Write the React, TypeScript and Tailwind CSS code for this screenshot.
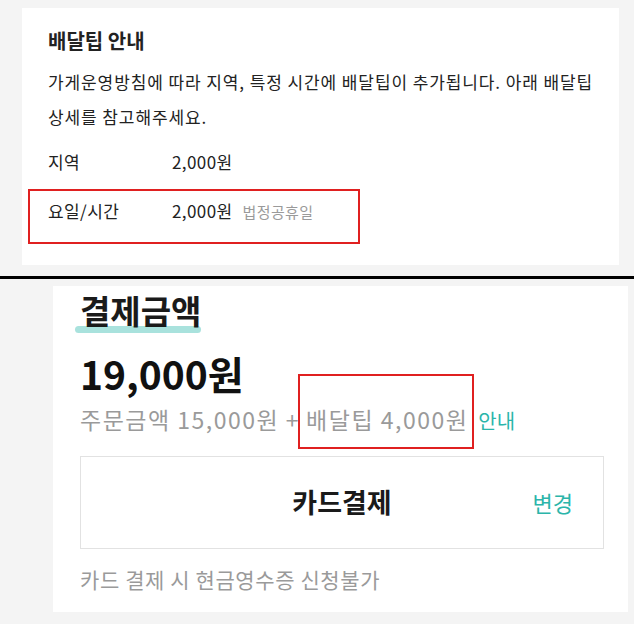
import React from 'react';

const kr = { fontFamily: '"Noto Sans CJK KR", "Noto Sans", sans-serif' };

const TipGuide = () => {
  return (
    <div className="h-[276px] bg-[#f4f4f4] pl-[22px] pr-[15px] pt-[8px]">
      <div className="h-[257px] bg-white pl-[26px] pt-[20px] text-[#222]">
        <h2 className="text-[20px] font-bold leading-[25px]">배달팁 안내</h2>
        <p className="mt-[11px] text-[17px] leading-[35px] tracking-[0.9px]">
          가게운영방침에 따라 지역, 특정 시간에 배달팁이 추가됩니다. 아래 배달팁
          <br />
          상세를 참고해주세요.
        </p>
        <div className="mt-[16px] flex text-[17px] leading-[24px] tracking-[0.4px]">
          <span className="w-[124px]">지역</span>
          <span>2,000원</span>
        </div>
        <div className="-ml-[20px] mt-[15px] w-[332px] border-2 border-[#e02020] pb-[18px] pl-[18px] pt-[8px]">
          <div className="flex items-baseline text-[17px] leading-[24px] tracking-[0.4px]">
            <span className="w-[124px]">요일/시간</span>
            <span>2,000원</span>
            <span className="ml-[10px] text-[15px] text-[#9a9a9a]">법정공휴일</span>
          </div>
        </div>
      </div>
    </div>
  );
};

const PaymentAmount = () => {
  return (
    <div className="h-[345px] bg-[#f4f4f4] pl-[53px] pr-[6px] pt-[7px]">
      <div className="h-[326px] bg-white pl-[27px] pr-[24px] pt-[5px]">
        <h2 className="relative inline-block text-[33px] font-bold leading-[38px] text-[#1a1a1a]">
          <span className="absolute -bottom-[4px] -left-[5px] right-0 h-[7px] rounded-sm bg-[#a9e2dd]"></span>
          <span className="relative">결제금액</span>
        </h2>
        <div className="mt-[20px] text-[39px] font-bold leading-[48px] text-[#111]">19,000원</div>
        <div className="mt-[7px] flex items-baseline text-[23px] leading-[30px] tracking-[1.5px] text-[#9a9a9a]">
          <span>주문금액 15,000원 +</span>
          <span className="relative ml-[6px]">
            배달팁 4,000원
            <span className="absolute -bottom-[15px] -left-[8px] -right-[6px] -top-[30px] border-2 border-[#e02020]"></span>
          </span>
          <span className="ml-[10px] text-[20px] tracking-normal text-[#2bb5aa]">안내</span>
        </div>
        <div className="mt-[20px] grid h-[93px] grid-cols-[1fr_auto_1fr] items-center border border-[#e2e2e2] px-[30px]">
          <span></span>
          <span className="text-[27px] font-bold text-[#1a1a1a]">카드결제</span>
          <span className="justify-self-end text-[22px] text-[#2bb5aa]">변경</span>
        </div>
        <p className="mt-[16px] text-[21px] leading-[28px] tracking-[0.6px] text-[#9a9a9a]">카드 결제 시 현금영수증 신청불가</p>
      </div>
    </div>
  );
};

export default function App() {
  return (
    <div className="w-[634px] h-[624px] overflow-hidden bg-[#f4f4f4]" style={kr}>
      <TipGuide />
      <div className="h-[3px] bg-black"></div>
      <PaymentAmount />
    </div>
  );
}
